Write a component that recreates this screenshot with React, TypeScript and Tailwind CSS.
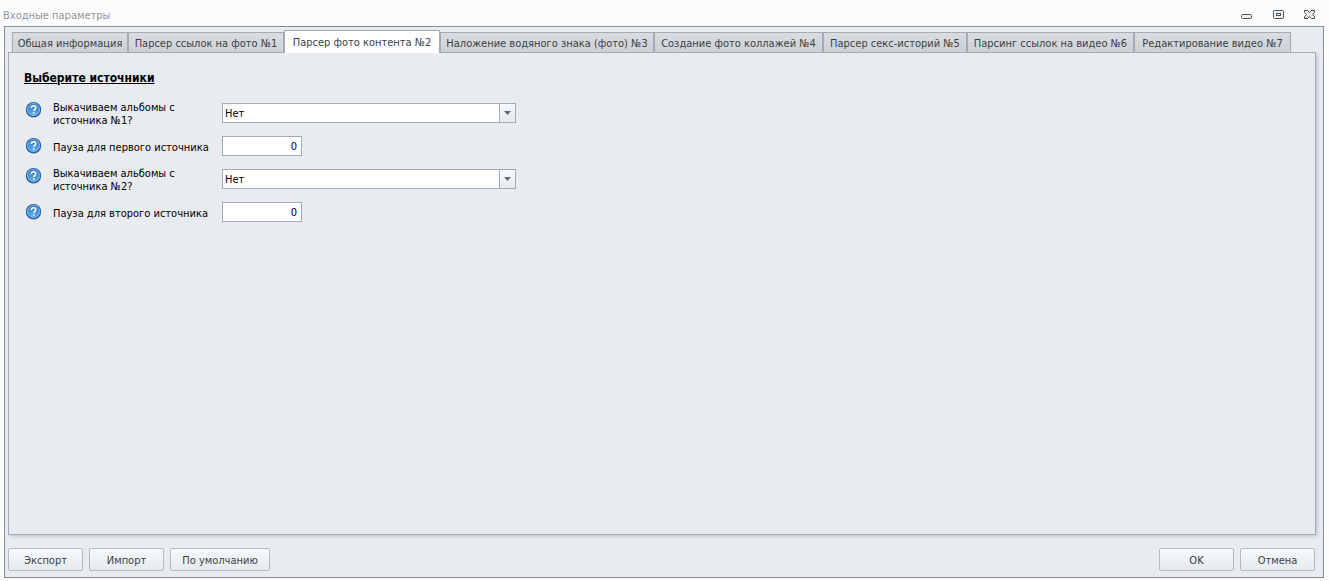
import React, { useState } from 'react';
import clsx from 'clsx';

const tabs = [
  { title: 'Общая информация', width: 'w-[116px]' },
  { title: 'Парсер ссылок на фото №1', width: 'w-[156px]' },
  { title: 'Парсер фото контента №2', width: 'w-[156px]' },
  { title: 'Наложение водяного знака (фото) №3', width: 'w-[214px]' },
  { title: 'Создание фото коллажей №4', width: 'w-[169px]' },
  { title: 'Парсер секс-историй №5', width: 'w-[144px]' },
  { title: 'Парсинг ссылок на видео №6', width: 'w-[167px]' },
  { title: 'Редактирование видео №7', width: 'w-[157px]' },
];

const HelpIcon: React.FC = () => (
  <svg width="16" height="16" viewBox="0 0 16 16" className="shrink-0" aria-hidden="true">
    <defs>
      <linearGradient id="help" x1="0" y1="0" x2="0" y2="1">
        <stop offset="0" stopColor="#3478be" />
        <stop offset="1" stopColor="#5fb0ee" />
      </linearGradient>
    </defs>
    <circle cx="7.5" cy="7.7" r="7.7" fill="#2461a6" />
    <circle cx="7.5" cy="7.5" r="6.1" fill="url(#help)" stroke="#9cc6ec" strokeWidth="0.8" />
    <path
      d="M5.3 5.9C5.3 4.6 6.3 3.8 7.5 3.8s2.3.8 2.3 2c0 1.5-2.1 1.7-2.1 3.3"
      fill="none"
      stroke="#fff"
      strokeWidth="1.5"
    />
    <rect x="6.9" y="10.1" width="1.6" height="1.6" fill="#fff" />
  </svg>
);

interface FieldRowProps {
  id: string;
  label: string;
  tall?: boolean;
  children: React.ReactNode;
}

const FieldRow: React.FC<FieldRowProps> = ({ id, label, tall, children }) => (
  <div className="flex h-[26px] items-center">
    <span className={clsx('w-[27px] shrink-0', tall && 'self-start pt-0.5')}>
      <HelpIcon />
    </span>
    <label
      htmlFor={id}
      className={clsx('w-[169px] shrink-0', tall ? 'pr-8 pt-px' : 'whitespace-nowrap pt-0.5')}
    >
      {label}
    </label>
    {children}
  </div>
);

const SelectBox: React.FC<{ id: string }> = ({ id }) => (
  <div className="relative w-[294px]">
    <select
      id={id}
      defaultValue="Нет"
      className="block h-5 w-full appearance-none border border-[#a5abb5] bg-white pl-0.5 pr-5 text-black outline-none"
    >
      <option>Нет</option>
      <option>Да</option>
    </select>
    <span className="pointer-events-none absolute inset-y-px right-px flex w-4 items-center justify-center border-l border-[#a5abb5] bg-linear-to-b from-[#f8fafc] to-[#e6e9ed]">
      <svg width="7" height="4" viewBox="0 0 7 4" fill="#636b75" aria-hidden="true">
        <path d="M0 0h7L3.5 4z" />
      </svg>
    </span>
  </div>
);

const NumberBox: React.FC<{ id: string }> = ({ id }) => (
  <input
    id={id}
    type="text"
    inputMode="numeric"
    defaultValue="0"
    className="h-5 w-20 border border-[#a5abb5] bg-white px-1 text-right text-black outline-none"
  />
);

interface DialogButtonProps {
  wide?: boolean;
  children: React.ReactNode;
}

const DialogButton: React.FC<DialogButtonProps> = ({ wide, children }) => (
  <button
    type="button"
    className={clsx(
      'h-[23px] rounded-xs border border-[#b5bac1] bg-linear-to-b from-[#f8fafc] to-[#e6e9ed] pt-0.5 text-[#3b3f47]',
      wide ? 'w-[100px]' : 'w-[75px]',
    )}
  >
    {children}
  </button>
);

const WindowControls: React.FC = () => (
  <div className="flex items-center gap-5">
    <button type="button" aria-label="Свернуть" className="h-3 w-3">
      <svg width="12" height="12" viewBox="0 0 12 12" stroke="#50575f">
        <rect x="0.5" y="5.5" width="10" height="4" rx="1" fill="#eceef0" />
      </svg>
    </button>
    <button type="button" aria-label="Развернуть" className="h-3 w-3">
      <svg width="12" height="12" viewBox="0 0 12 12" stroke="#50575f">
        <rect x="0.5" y="1.5" width="10" height="8" rx="1" fill="#eceef0" />
        <rect x="3.5" y="4.5" width="4" height="2" fill="#fff" />
      </svg>
    </button>
    <button type="button" aria-label="Закрыть" className="h-3 w-3">
      <svg width="12" height="12" viewBox="0 0 12 12" className="overflow-visible" fill="#eceef0" stroke="#454c54">
        <path d="M-.5 1.5h3l2 2 2-2h3v2l-2 2 2 2v2h-3l-2-2-2 2h-3v-2l2-2-2-2z" />
      </svg>
    </button>
  </div>
);

const App: React.FC = () => {
  const [active, setActive] = useState(2);

  return (
    <div className="flex min-h-screen flex-col bg-[#fcfcfc] pb-[3px] font-['DejaVu_Sans_Condensed','DejaVu_Sans',sans-serif] text-[11px] leading-[13px] text-black">
      <header className="flex h-[26px] items-center justify-between pl-[3px] pr-3 pt-1">
        <h1 className="text-[#92959c]">Входные параметры</h1>
        <WindowControls />
      </header>

      <main className="ml-1 mr-[5px] flex grow flex-col border border-[#868c95] bg-[#e8ebf0] pb-1.5 pl-[3px] pr-[7px]">
        <div role="tablist" className="z-10 -mb-px flex items-end pl-1 pt-[3px]">
          {tabs.map((tab, i) => (
            <button
              key={tab.title}
              type="button"
              role="tab"
              aria-selected={i === active}
              onClick={() => setActive(i)}
              className={clsx(
                'shrink-0 whitespace-nowrap border-[#a5abb5] text-center text-[#3b3f47]',
                tab.width,
                i === active
                  ? 'h-[23px] border-x border-t bg-white'
                  : 'h-[21px] border bg-linear-to-b from-[#d9dde2] to-[#cdd1d6] pt-0.5',
              )}
            >
              {tab.title}
            </button>
          ))}
        </div>

        <section
          role="tabpanel"
          className="grow border border-[#a5abb5] px-[15px] pt-[18px] shadow-[2px_2px_3px_#c9ccd5]"
        >
          <h2 className="text-[12px] font-bold leading-[14px] underline">Выберите источники</h2>
          <div className="mt-[15px] flex flex-col gap-[7px] pl-0.5">
            <FieldRow id="source1" label="Выкачиваем альбомы с источника №1?" tall>
              <SelectBox id="source1" />
            </FieldRow>
            <FieldRow id="pause1" label="Пауза для первого источника">
              <NumberBox id="pause1" />
            </FieldRow>
            <FieldRow id="source2" label="Выкачиваем альбомы с источника №2?" tall>
              <SelectBox id="source2" />
            </FieldRow>
            <FieldRow id="pause2" label="Пауза для второго источника">
              <NumberBox id="pause2" />
            </FieldRow>
          </div>
        </section>

        <footer className="mt-[13px] flex justify-between pr-px">
          <div className="flex gap-1.5">
            <DialogButton>Экспорт</DialogButton>
            <DialogButton>Импорт</DialogButton>
            <DialogButton wide>По умолчанию</DialogButton>
          </div>
          <div className="flex gap-1.5">
            <DialogButton>OK</DialogButton>
            <DialogButton>Отмена</DialogButton>
          </div>
        </footer>
      </main>
    </div>
  );
};

export default App;
